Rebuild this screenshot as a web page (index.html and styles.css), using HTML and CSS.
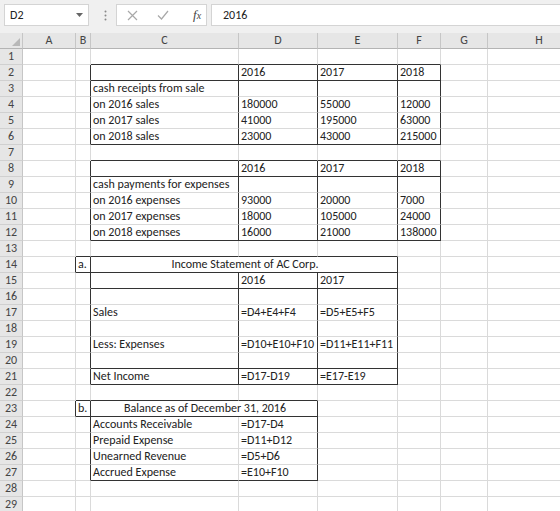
FILE: index.html
```html
<!DOCTYPE html>
<html lang="en">
<head>
  <meta charset="UTF-8">
  <title>Book1 - Excel</title>
  <link rel="stylesheet" href="styles.css">
</head>
<body>

<div class="bar">
  <div class="namebox">
    <span>D2</span>
    <svg class="arrow" width="7" height="4" viewBox="0 0 7 4"><path d="M0 0H7L3.5 4Z" fill="#666"/></svg>
  </div>
  <svg class="dots" width="3" height="11" viewBox="0 0 3 11">
    <circle cx="1.5" cy="1.5" r="1" fill="#888"/>
    <circle cx="1.5" cy="5.5" r="1" fill="#888"/>
    <circle cx="1.5" cy="9.5" r="1" fill="#888"/>
  </svg>
  <div class="btns">
    <svg width="11" height="11" viewBox="0 0 11 11"><path d="M1 1L10 10M10 1L1 10" stroke="#a8a8a8" stroke-width="1.2" fill="none"/></svg>
    <svg width="12" height="10" viewBox="0 0 12 10"><path d="M1 5.5L4.5 9L11 1" stroke="#a8a8a8" stroke-width="1.2" fill="none"/></svg>
    <span class="fx">f<span class="fxs">x</span></span>
  </div>
  <div class="formula">2016</div>
</div>

<div class="sheet">
  <div class="row head">
    <div class="corner"><svg width="8" height="8" viewBox="0 0 8 8"><path d="M8 0V8H0Z" fill="#b8b8b8"/></svg></div>
    <div class="ch">A</div><div class="ch">B</div><div class="ch">C</div><div class="ch">D</div>
    <div class="ch">E</div><div class="ch">F</div><div class="ch">G</div><div class="ch">H</div>
  </div>

  <div class="row"><div class="rh">1</div><div class="c"></div><div class="c"></div><div class="c b"></div><div class="c b"></div><div class="c b"></div><div class="c b"></div><div class="c"></div><div class="c"></div></div>
  <div class="row"><div class="rh">2</div><div class="c"></div><div class="c r"></div><div class="c r b"></div><div class="c r b">2016</div><div class="c r b">2017</div><div class="c r b">2018</div><div class="c"></div><div class="c"></div></div>
  <div class="row"><div class="rh">3</div><div class="c"></div><div class="c r"></div><div class="c r">cash receipts from sale</div><div class="c r"></div><div class="c r"></div><div class="c r"></div><div class="c"></div><div class="c"></div></div>
  <div class="row"><div class="rh">4</div><div class="c"></div><div class="c r"></div><div class="c r">on 2016 sales</div><div class="c r">180000</div><div class="c r">55000</div><div class="c r">12000</div><div class="c"></div><div class="c"></div></div>
  <div class="row"><div class="rh">5</div><div class="c"></div><div class="c r"></div><div class="c r">on 2017 sales</div><div class="c r">41000</div><div class="c r">195000</div><div class="c r">63000</div><div class="c"></div><div class="c"></div></div>
  <div class="row"><div class="rh">6</div><div class="c"></div><div class="c r"></div><div class="c r b">on 2018 sales</div><div class="c r b">23000</div><div class="c r b">43000</div><div class="c r b">215000</div><div class="c"></div><div class="c"></div></div>
  <div class="row"><div class="rh">7</div><div class="c"></div><div class="c"></div><div class="c b"></div><div class="c b"></div><div class="c b"></div><div class="c b"></div><div class="c"></div><div class="c"></div></div>
  <div class="row"><div class="rh">8</div><div class="c"></div><div class="c r"></div><div class="c r b"></div><div class="c r b">2016</div><div class="c r b">2017</div><div class="c r b">2018</div><div class="c"></div><div class="c"></div></div>
  <div class="row"><div class="rh">9</div><div class="c"></div><div class="c r"></div><div class="c r">cash payments for expenses</div><div class="c r"></div><div class="c r"></div><div class="c r"></div><div class="c"></div><div class="c"></div></div>
  <div class="row"><div class="rh">10</div><div class="c"></div><div class="c r"></div><div class="c r">on 2016 expenses</div><div class="c r">93000</div><div class="c r">20000</div><div class="c r">7000</div><div class="c"></div><div class="c"></div></div>
  <div class="row"><div class="rh">11</div><div class="c"></div><div class="c r"></div><div class="c r">on 2017 expenses</div><div class="c r">18000</div><div class="c r">105000</div><div class="c r">24000</div><div class="c"></div><div class="c"></div></div>
  <div class="row"><div class="rh">12</div><div class="c"></div><div class="c r"></div><div class="c r b">on 2018 expenses</div><div class="c r b">16000</div><div class="c r b">21000</div><div class="c r b">138000</div><div class="c"></div><div class="c"></div></div>
  <div class="row"><div class="rh">13</div><div class="c"></div><div class="c b"></div><div class="c b"></div><div class="c b"></div><div class="c b"></div><div class="c"></div><div class="c"></div><div class="c"></div></div>
  <div class="row"><div class="rh">14</div><div class="c r"></div><div class="c r b">a.</div><div class="c r b m3 ctr">Income Statement of AC Corp.</div><div class="c"></div><div class="c"></div><div class="c"></div></div>
  <div class="row"><div class="rh">15</div><div class="c"></div><div class="c r"></div><div class="c r b"></div><div class="c r b">2016</div><div class="c r b">2017</div><div class="c"></div><div class="c"></div><div class="c"></div></div>
  <div class="row"><div class="rh">16</div><div class="c"></div><div class="c r"></div><div class="c r"></div><div class="c r"></div><div class="c r"></div><div class="c"></div><div class="c"></div><div class="c"></div></div>
  <div class="row"><div class="rh">17</div><div class="c"></div><div class="c r"></div><div class="c r">Sales</div><div class="c r">=D4+E4+F4</div><div class="c r">=D5+E5+F5</div><div class="c"></div><div class="c"></div><div class="c"></div></div>
  <div class="row"><div class="rh">18</div><div class="c"></div><div class="c r"></div><div class="c r"></div><div class="c r"></div><div class="c r"></div><div class="c"></div><div class="c"></div><div class="c"></div></div>
  <div class="row"><div class="rh">19</div><div class="c"></div><div class="c r"></div><div class="c r">Less: Expenses</div><div class="c r">=D10+E10+F10</div><div class="c r">=D11+E11+F11</div><div class="c"></div><div class="c"></div><div class="c"></div></div>
  <div class="row"><div class="rh">20</div><div class="c"></div><div class="c r"></div><div class="c r b"></div><div class="c r b"></div><div class="c r b"></div><div class="c"></div><div class="c"></div><div class="c"></div></div>
  <div class="row"><div class="rh">21</div><div class="c"></div><div class="c r"></div><div class="c r b">Net Income</div><div class="c r b">=D17-D19</div><div class="c r b">=E17-E19</div><div class="c"></div><div class="c"></div><div class="c"></div></div>
  <div class="row"><div class="rh">22</div><div class="c"></div><div class="c b"></div><div class="c b"></div><div class="c b"></div><div class="c"></div><div class="c"></div><div class="c"></div><div class="c"></div></div>
  <div class="row"><div class="rh">23</div><div class="c r"></div><div class="c r b">b.</div><div class="c r b m2 ctr">Balance as of December 31, 2016</div><div class="c"></div><div class="c"></div><div class="c"></div><div class="c"></div></div>
  <div class="row"><div class="rh">24</div><div class="c"></div><div class="c r"></div><div class="c">Accounts Receivable</div><div class="c r">=D17-D4</div><div class="c"></div><div class="c"></div><div class="c"></div><div class="c"></div></div>
  <div class="row"><div class="rh">25</div><div class="c"></div><div class="c r"></div><div class="c">Prepaid Expense</div><div class="c r">=D11+D12</div><div class="c"></div><div class="c"></div><div class="c"></div><div class="c"></div></div>
  <div class="row"><div class="rh">26</div><div class="c"></div><div class="c r"></div><div class="c">Unearned Revenue</div><div class="c r">=D5+D6</div><div class="c"></div><div class="c"></div><div class="c"></div><div class="c"></div></div>
  <div class="row"><div class="rh">27</div><div class="c"></div><div class="c r"></div><div class="c b">Accrued Expense</div><div class="c r b">=E10+F10</div><div class="c"></div><div class="c"></div><div class="c"></div><div class="c"></div></div>
  <div class="row"><div class="rh">28</div><div class="c"></div><div class="c"></div><div class="c"></div><div class="c"></div><div class="c"></div><div class="c"></div><div class="c"></div><div class="c"></div></div>
  <div class="row"><div class="rh">29</div><div class="c"></div><div class="c"></div><div class="c"></div><div class="c"></div><div class="c"></div><div class="c"></div><div class="c"></div><div class="c"></div></div>
</div>

</body>
</html>
```

FILE: styles.css
```css
body {
  margin: 0;
  width: 560px;
  height: 511px;
  overflow: hidden;
  background: #fff;
  color: #222;
  font-family: Calibri, Carlito, Lato, sans-serif;
  font-size: 12px;
}

/* formula bar */
.bar {
  height: 33px;
  box-sizing: border-box;
  padding-top: 4px;
  background: #f0f0f0;
  display: flex;
  align-items: flex-start;
}
.namebox {
  margin-left: 4px;
  width: 85px;
  height: 22px;
  box-sizing: border-box;
  padding: 0 5px 0 5px;
  background: #fff;
  border: 1px solid #d4d4d4;
  display: flex;
  align-items: center;
  justify-content: space-between;
}
.dots {
  margin: 6px 0 0 15px;
}
.btns {
  margin-left: 9px;
  width: 91px;
  height: 22px;
  box-sizing: border-box;
  background: #fff;
  border: 1px solid #d4d4d4;
  display: flex;
  align-items: center;
  padding-left: 10px;
  gap: 19px;
}
.fx {
  font-family: "Liberation Serif", serif;
  font-style: italic;
  font-size: 13px;
  color: #444;
  margin-left: 5px;
}
.fxs {
  font-size: 10px;
}
.formula {
  margin-left: 4px;
  flex: 1;
  height: 22px;
  box-sizing: border-box;
  padding-left: 11px;
  background: #fff;
  border: 1px solid #d4d4d4;
  border-right: none;
  line-height: 20px;
}

/* grid */
.sheet {
  width: 560px;
  overflow: hidden;
}
.row {
  display: grid;
  grid-template-columns: 23px 53px 15px 148px 79px 80px 43px 47px 103px;
  height: 16px;
}
.row > div {
  box-sizing: border-box;
  border-right: 1px solid #dadada;
  border-bottom: 1px solid #dadada;
  white-space: nowrap;
  line-height: 15px;
}
.head > div {
  background: #e6e6e6;
  border-right-color: #c6c6c6;
  border-bottom-color: #b4b4b4;
  color: #444;
  text-align: center;
}
.corner {
  display: flex;
  align-items: flex-end;
  justify-content: flex-end;
  padding: 0 2px 2px 0;
}
.rh {
  background: #e6e6e6;
  color: #444;
  text-align: center;
  line-height: 14px !important;
  border-right-color: #c6c6c6 !important;
  border-bottom-color: #d0d0d0 !important;
}
.c {
  padding-left: 2px;
}
.row > .r {
  border-right-color: #333;
}
.row > .b {
  border-bottom-color: #333;
}
.m3 {
  grid-column: span 3;
}
.m2 {
  grid-column: span 2;
}
.ctr {
  text-align: center;
}
```
